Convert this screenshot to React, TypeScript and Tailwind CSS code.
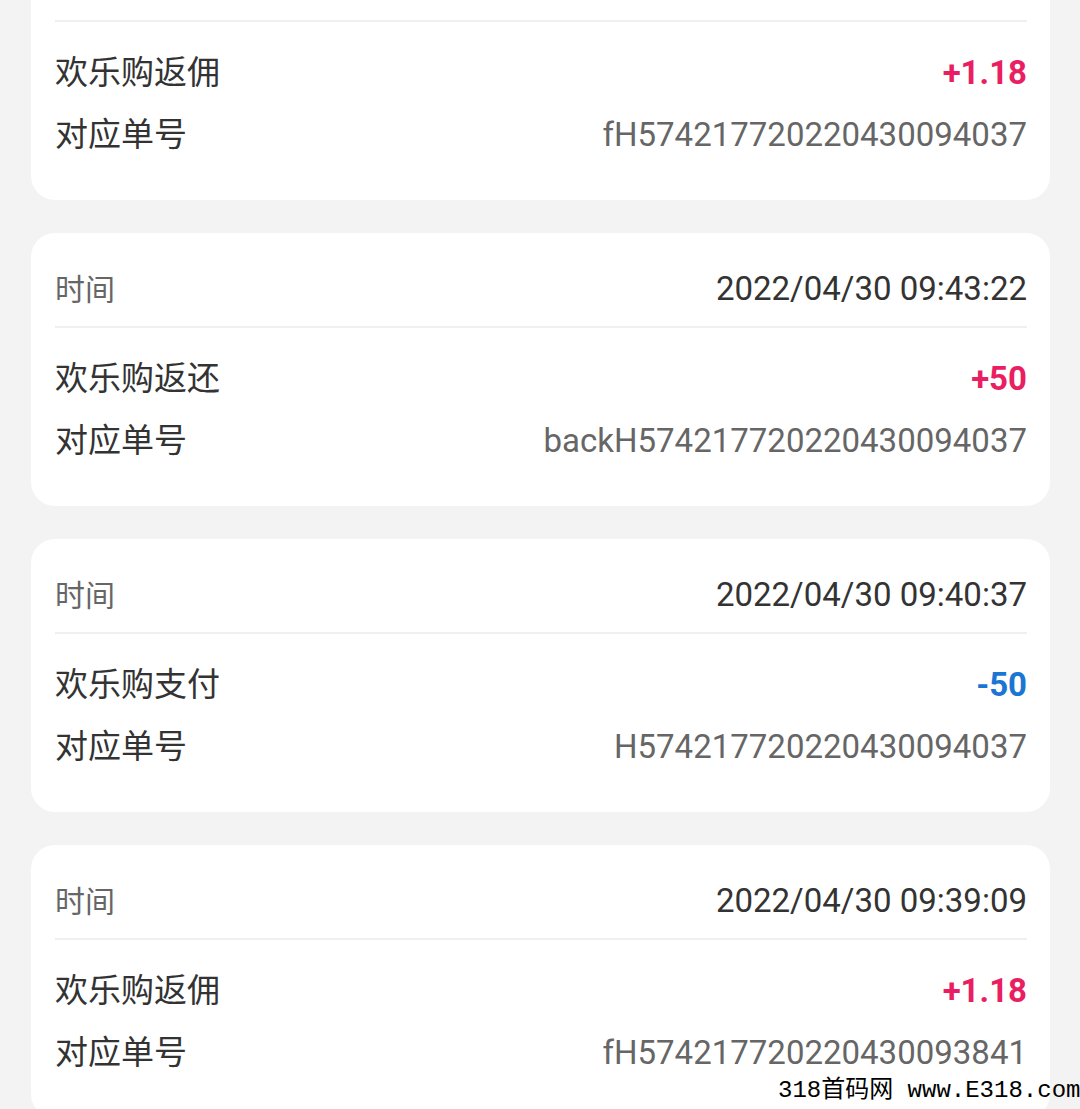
import React from 'react';

type Record = {
  time: string;
  title: string;
  amount: string;
  orderNo: string;
};

const RECORDS: Record[] = [
  { time: '2022/04/30 09:44:05', title: '欢乐购返佣', amount: '+1.18', orderNo: 'fH574217720220430094037' },
  { time: '2022/04/30 09:43:22', title: '欢乐购返还', amount: '+50', orderNo: 'backH574217720220430094037' },
  { time: '2022/04/30 09:40:37', title: '欢乐购支付', amount: '-50', orderNo: 'H574217720220430094037' },
  { time: '2022/04/30 09:39:09', title: '欢乐购返佣', amount: '+1.18', orderNo: 'fH574217720220430093841' },
];

const RecordCard: React.FC<{ item: Record }> = ({ item }) => {
  const isIncome = item.amount.startsWith('+');
  return (
    <div className="bg-white rounded-[24px] pl-[24px] pr-[23px] h-[273px] shrink-0">
      {/* 时间 */}
      <div className="flex items-center justify-between pt-[36px] pb-[15px]">
        <span className="text-[30px] leading-[42px] text-[#666]">时间</span>
        <span className="text-[33px] leading-[42px] text-[#333] -translate-y-[1px]">{item.time}</span>
      </div>
      <div className="h-[2px] bg-[#f0f0f0]" />

      <div className="pt-[20px]">
        <div className="flex items-center justify-between h-[62px]">
          <span className="text-[33px] text-[#333]">{item.title}</span>
          {isIncome ? (
            <span className="text-[33px] font-bold text-[#e91e63]">{item.amount}</span>
          ) : (
            <span className="text-[33px] font-bold text-[#1976d2]">{item.amount}</span>
          )}
        </div>
        <div className="flex items-center justify-between h-[62px]">
          <span className="text-[33px] text-[#333]">对应单号</span>
          <span className="text-[33px] text-[#666]">{item.orderNo}</span>
        </div>
      </div>
    </div>
  );
};

const App: React.FC = () => {
  return (
    <div
      className="relative w-[1080px] h-[1109px] overflow-hidden bg-[#f3f3f3]"
      style={{ fontFamily: 'Roboto, "Noto Sans CJK SC", sans-serif' }}
    >
      {/* list is scrolled: first card is partly above the viewport */}
      <div className="flex flex-col gap-[33px] pl-[31px] pr-[30px] -mt-[73px]">
        {RECORDS.map((r, i) => (
          <RecordCard key={i} item={r} />
        ))}
      </div>

      {/* watermark */}
      <div
        className="absolute right-0 bottom-[5px] left-[778px] whitespace-nowrap text-[24px] leading-[26px] text-black"
        style={{ fontFamily: '"Liberation Mono", "Noto Sans CJK SC", monospace' }}
      >
        318首码网 www.E318.com
      </div>
    </div>
  );
};

export default App;
